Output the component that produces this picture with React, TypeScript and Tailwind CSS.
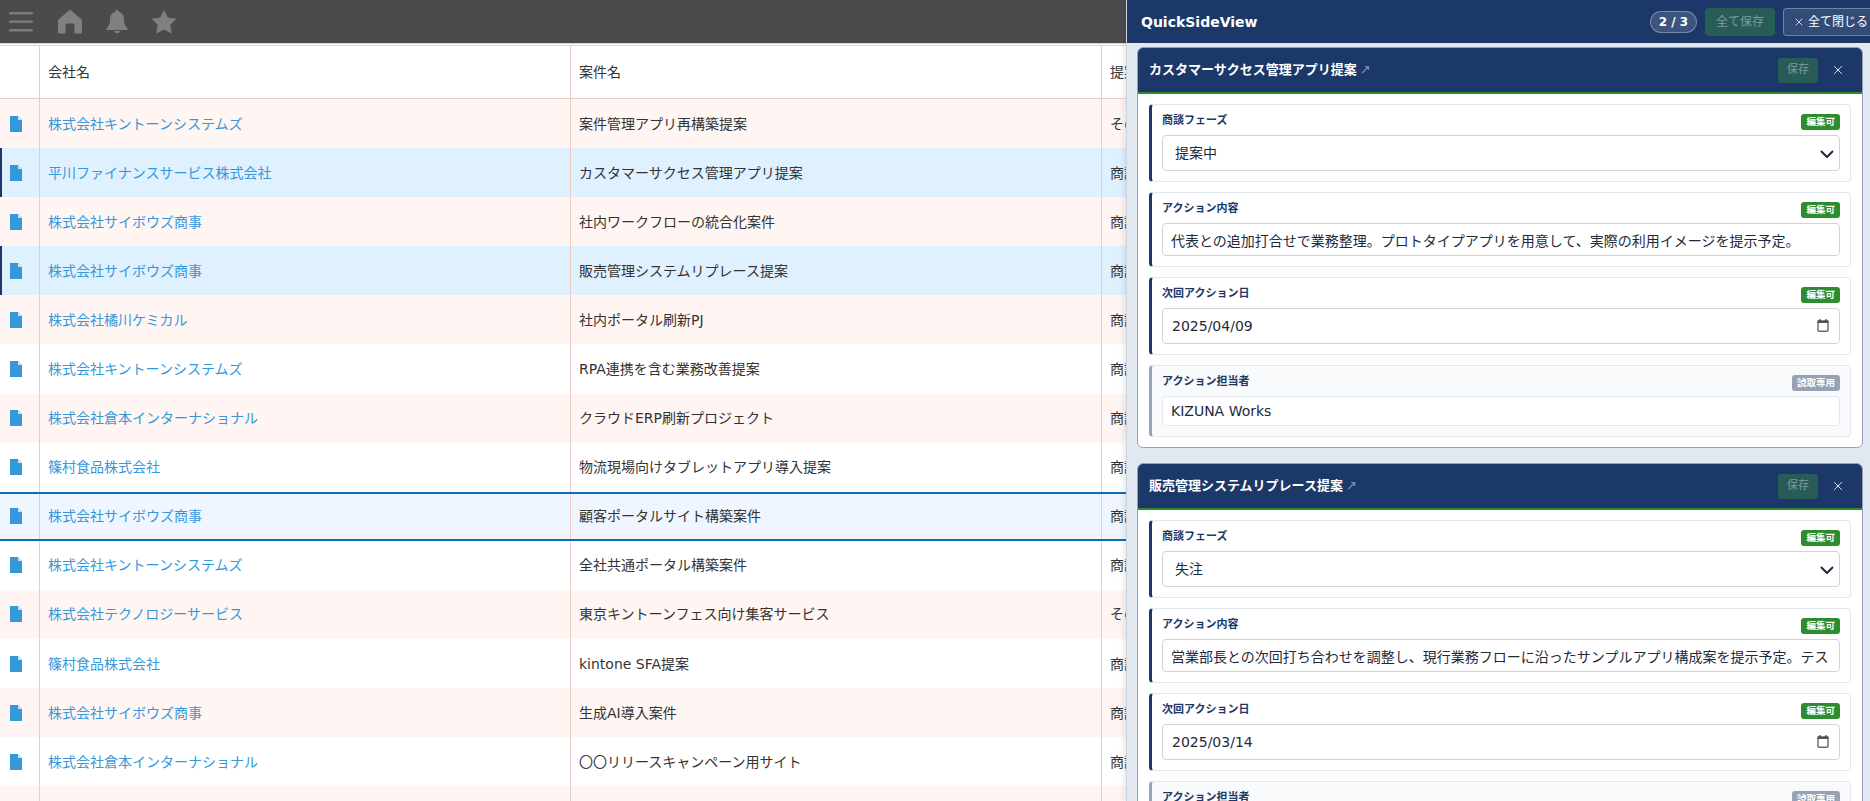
import { X } from 'lucide-react'

const FONT = { fontFamily: '"DejaVu Sans", "Noto Sans CJK JP", sans-serif' }

type RowKind = 'pink' | 'white' | 'picked' | 'current'

interface Row {
  company: string
  deal: string
  status: string
  kind: RowKind
}

const rows: Row[] = [
  { company: '株式会社キントーンシステムズ', deal: '案件管理アプリ再構築提案', status: 'その他', kind: 'pink' },
  { company: '平川ファイナンスサービス株式会社', deal: 'カスタマーサクセス管理アプリ提案', status: '商談中', kind: 'picked' },
  { company: '株式会社サイボウズ商事', deal: '社内ワークフローの統合化案件', status: '商談中', kind: 'pink' },
  { company: '株式会社サイボウズ商事', deal: '販売管理システムリプレース提案', status: '商談中', kind: 'picked' },
  { company: '株式会社橘川ケミカル', deal: '社内ポータル刷新PJ', status: '商談中', kind: 'pink' },
  { company: '株式会社キントーンシステムズ', deal: 'RPA連携を含む業務改善提案', status: '商談中', kind: 'white' },
  { company: '株式会社倉本インターナショナル', deal: 'クラウドERP刷新プロジェクト', status: '商談中', kind: 'pink' },
  { company: '篠村食品株式会社', deal: '物流現場向けタブレットアプリ導入提案', status: '商談中', kind: 'white' },
  { company: '株式会社サイボウズ商事', deal: '顧客ポータルサイト構築案件', status: '商談中', kind: 'current' },
  { company: '株式会社キントーンシステムズ', deal: '全社共通ポータル構築案件', status: '商談中', kind: 'white' },
  { company: '株式会社テクノロジーサービス', deal: '東京キントーンフェス向け集客サービス', status: 'その他', kind: 'pink' },
  { company: '篠村食品株式会社', deal: 'kintone SFA提案', status: '商談中', kind: 'white' },
  { company: '株式会社サイボウズ商事', deal: '生成AI導入案件', status: '商談中', kind: 'pink' },
  { company: '株式会社倉本インターナショナル', deal: '〇〇リリースキャンペーン用サイト', status: '商談中', kind: 'white' },
  { company: '', deal: '', status: '', kind: 'pink' },
]

const rowBg: Record<RowKind, string> = {
  pink: 'bg-[#fff5f3]',
  white: 'bg-white',
  picked: 'bg-[#dff0fe]',
  current: 'bg-[#eff6ff] border-y-2 border-[#0b6fb8]',
}

function FileIcon() {
  return (
    <svg width="12" height="16" viewBox="0 0 12 16">
      <path d="M0 0h8l4 4v12H0z" fill="#3498db" />
      <path d="M8 0l4 4H8z" fill="#cfe5f6" />
    </svg>
  )
}

function TopBar() {
  return (
    <div className="flex h-[43px] items-center bg-[#4b4b4b] pl-[9px]">
      <svg width="24" height="20" viewBox="0 0 24 20" fill="#7d7d7d">
        <rect y="0" width="24" height="2.4" rx="1" />
        <rect y="8.4" width="24" height="2.4" rx="1" />
        <rect y="17" width="24" height="2.4" rx="1" />
      </svg>
      <svg className="ml-[25px]" width="24" height="25" viewBox="0 0 24 25" fill="#808080">
        <path d="M12 0.5 24 11v12a1.5 1.5 0 0 1-1.5 1.5H16.500V16a1.500 1.500 0 0 0-1.500-1.500H9A1.500 1.500 0 0 0 7.500 16v8.500H1.500A1.500 1.500 0 0 1 0 23V11z" />
      </svg>
      <svg className="ml-[24px]" width="22" height="24" viewBox="0 0 22 24" fill="#808080">
        <path d="M11 0a2 2 0 0 1 2 2.100C16.600 3 18 6 18 9.500c0 4.500 1 6.500 3.400 8.700.8.800.3 1.800-.8 1.800H1.400c-1.100 0-1.600-1-.8-1.800C3 16 4 14 4 9.500 4 6 5.400 3 9 2.100A2 2 0 0 1 11 0z" />
        <path d="M7.800 21h6.400a3.300 3 0 0 1-6.400 0z" />
      </svg>
      <svg className="ml-[24px]" width="24" height="24" viewBox="0 0 24 24" fill="#808080">
        <path d="M12 .8l3.500 7.300 8 1.100-5.800 5.600 1.400 8-7.100-3.800-7.100 3.800 1.400-8L.5 9.200l8-1.100z" stroke="#808080" strokeLinejoin="round" />
      </svg>
    </div>
  )
}

function RecordTable() {
  return (
    <div className="text-sm text-[#333]">
      <div className="h-[3px] border-y border-[#eccdc6] bg-white" />
      <div className="grid h-[53px] grid-cols-[40px_531px_531px_1fr] items-stretch border-b border-[#eccdc6] bg-white">
        <div className="border-r border-[#eccdc6]" />
        <div className="flex items-center border-r border-[#eccdc6] pl-2">会社名</div>
        <div className="flex items-center border-r border-[#eccdc6] pl-2">案件名</div>
        <div className="flex items-center overflow-hidden whitespace-nowrap pl-2">提案状況</div>
      </div>
      {rows.map((row, i) => (
        <div key={i} className={`grid h-[49.1px] grid-cols-[40px_531px_531px_1fr] ${rowBg[row.kind]}`}>
          <div
            className={`flex items-center border-r border-r-[#eccdc6] ${
              row.kind === 'picked' ? 'border-l-2 border-l-[#1b3868] pl-2' : 'pl-[10px]'
            }`}
          >
            {row.company && <FileIcon />}
          </div>
          <div className="flex items-center border-r border-[#eccdc6] pl-2 text-[#3498db]">{row.company}</div>
          <div className="flex items-center border-r border-[#eccdc6] pl-2">{row.deal}</div>
          <div className="flex items-center overflow-hidden whitespace-nowrap pl-2">{row.status}</div>
        </div>
      ))}
    </div>
  )
}

function Badge({ readOnly }: { readOnly?: boolean }) {
  return (
    <span
      className={`flex h-4 items-center rounded-[3px] px-[5px] text-[9.5px] font-bold leading-none text-white ${
        readOnly ? 'bg-[#94a3b8]' : 'bg-[#2e8b2e]'
      }`}
    >
      {readOnly ? '読取専用' : '編集可'}
    </span>
  )
}

function Field({ label, readOnly, children }: { label: string; readOnly?: boolean; children: React.ReactNode }) {
  return (
    <div
      className={`rounded-[4px] border border-l-[3px] border-[#e2e8f0] px-[10px] pb-[10px] pt-2 ${
        readOnly ? 'border-l-[#94a3b8] bg-[#f8fafc]' : 'border-l-[#1b3868] bg-white'
      }`}
    >
      <div className="mb-[5px] flex h-[17px] items-center justify-between">
        <span className="text-[11px] font-bold text-[#1b3868]">{label}</span>
        <Badge readOnly={readOnly} />
      </div>
      {children}
    </div>
  )
}

function SelectBox({ value }: { value: string }) {
  return (
    <div className="relative">
      <select
        defaultValue={value}
        className="h-[36px] w-full appearance-none rounded-[4px] border border-[#cbd5e1] bg-white pl-[12px] text-sm text-[#1e293b]"
      >
        <option>{value}</option>
      </select>
      <svg className="pointer-events-none absolute right-[6px] top-[15px]" width="14" height="8" viewBox="0 0 14 8" fill="none">
        <path d="M1 1l6 6 6-6" stroke="#1e293b" strokeWidth="2" />
      </svg>
    </div>
  )
}

function TextBox({ value, readOnly }: { value: string; readOnly?: boolean }) {
  return (
    <input
      readOnly
      value={value}
      className={`w-full rounded-[4px] border bg-white pl-2 pr-2 text-sm text-[#1e293b] ${
        readOnly ? 'h-[30px] border-[#e2e8f0]' : 'h-[33px] border-[#cbd5e1]'
      }`}
    />
  )
}

function DateBox({ value }: { value: string }) {
  return (
    <div className="relative">
      <input
        readOnly
        value={value}
        className="h-[36px] w-full rounded-[4px] border border-[#cbd5e1] bg-white pl-[9px] text-sm text-[#1e293b]"
      />
      <svg className="pointer-events-none absolute right-[11px] top-[11px]" width="12" height="13" viewBox="0 0 12 13">
        <path d="M2.500 0h1v1.500h5V0h1v1.500H11.500V4H.5V1.500h2z" fill="#111" />
        <rect x="1" y="3" width="10" height="9.300" rx="1" fill="none" stroke="#6b6b6b" strokeWidth="1.400" />
      </svg>
    </div>
  )
}

interface Deal {
  title: string
  phase: string
  action: string
  date: string
}

function DealCard({ deal }: { deal: Deal }) {
  return (
    <div className="mb-[15px] overflow-hidden rounded-[6px] border border-[#94a3b8] bg-white">
      <div className="flex h-[46px] items-center justify-between border-b-2 border-[#2e8b2e] bg-[#1b3868] pl-[11px] pr-[17px]">
        <div className="text-[13px] font-bold text-white">
          {deal.title}
          <span className="ml-[3px] font-normal text-[#8a9ab5]">↗</span>
        </div>
        <div className="flex items-center gap-[13px]">
          <button type="button" className="h-[25px] w-10 rounded-[3px] bg-[#285c57] text-[11px] text-[#7f9aa5]">
            保存
          </button>
          <X className="h-[14px] w-[14px] text-white" strokeWidth={1.5} />
        </div>
      </div>
      <div className="flex flex-col gap-[10px] px-[11px] pb-[10px] pt-[10px]">
        <Field label="商談フェーズ">
          <SelectBox value={deal.phase} />
        </Field>
        <Field label="アクション内容">
          <TextBox value={deal.action} />
        </Field>
        <Field label="次回アクション日">
          <DateBox value={deal.date} />
        </Field>
        <Field label="アクション担当者" readOnly>
          <TextBox value="KIZUNA Works" readOnly />
        </Field>
      </div>
    </div>
  )
}

const deals: Deal[] = [
  {
    title: 'カスタマーサクセス管理アプリ提案',
    phase: '提案中',
    action: '代表との追加打合せで業務整理。プロトタイプアプリを用意して、実際の利用イメージを提示予定。',
    date: '2025/04/09',
  },
  {
    title: '販売管理システムリプレース提案',
    phase: '失注',
    action: '営業部長との次回打ち合わせを調整し、現行業務フローに沿ったサンプルアプリ構成案を提示予定。テストテストテスト',
    date: '2025/03/14',
  },
]

function QuickSideView() {
  return (
    <div className="h-full w-[747px] shrink-0 overflow-hidden border-l border-[#cbd5e1] bg-[#e2e8f0] shadow-[-2px_0_6px_rgba(0,0,0,0.1)]">
      <div className="flex h-[43px] items-center justify-between bg-[#1b3868] pl-[14px] pr-0">
        <div className="text-sm font-bold text-white">QuickSideView</div>
        <div className="flex items-center">
          <span className="flex h-[22px] w-[47px] items-center justify-center rounded-full border border-white/30 bg-white/15 text-xs font-bold text-white">
            2 / 3
          </span>
          <button type="button" className="ml-2 h-7 w-[70px] rounded-[4px] bg-[#285c57] text-xs text-[#7f9aa5]">
            全て保存
          </button>
          <button
            type="button"
            className="ml-2 flex h-7 w-[90px] items-center gap-[3px] rounded-[4px] border border-white/30 bg-white/10 pl-[9px] text-xs text-white"
          >
            <X className="h-3 w-3" strokeWidth={1.5} />
            全て閉じる
          </button>
        </div>
      </div>
      <div className="px-[10px] pt-1">
        {deals.map((deal) => (
          <DealCard key={deal.title} deal={deal} />
        ))}
      </div>
    </div>
  )
}

export default function App() {
  return (
    <div className="flex h-[801px] w-[1870px] overflow-hidden bg-white" style={FONT}>
      <div className="h-full w-[1126px] shrink-0 overflow-hidden">
        <TopBar />
        <RecordTable />
      </div>
      <QuickSideView />
    </div>
  )
}
